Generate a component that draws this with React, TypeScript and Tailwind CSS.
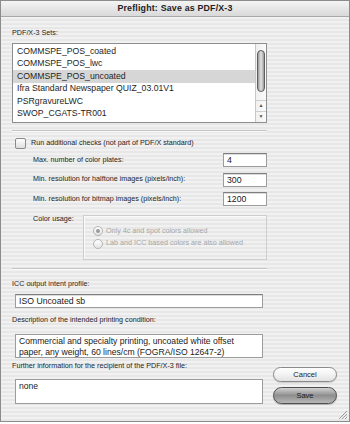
const stripes =
  "bg-[repeating-linear-gradient(to_bottom,#f1f1f1_0px,#f1f1f1_2px,#e7e7e7_2px,#e7e7e7_4px)]";

const sets = [
  "COMMSPE_POS_coated",
  "COMMSPE_POS_lwc",
  "COMMSPE_POS_uncoated",
  "Ifra Standard Newspaper QUIZ_03.01V1",
  "PSRgravureLWC",
  "SWOP_CGATS-TR001",
];

function Field({ value, className = "" }: { value: string; className?: string }) {
  return (
    <div
      className={`h-[14px] whitespace-nowrap border border-[#9c9c9c] border-t-[#7e7e7e] bg-white px-[3px] text-[8.7px] leading-[12px] text-[#1a1a1a] shadow-[inset_0_1px_0_#dcdcdc] ${className}`}
    >
      {value}
    </div>
  );
}

function Radio({ checked, label }: { checked?: boolean; label: string }) {
  return (
    <div className="flex h-[12.5px] items-center gap-[3px] whitespace-nowrap">
      <span className="flex h-[10px] w-[10px] shrink-0 items-center justify-center rounded-full border border-[#b4b4b4] bg-gradient-to-b from-[#ffffff] to-[#e4e4e4]">
        {checked && <span className="h-[4px] w-[4px] rounded-full bg-[#9a9a9a]" />}
      </span>
      <span className="text-[#a6a6a6]">{label}</span>
    </div>
  );
}

function ResizeGrip() {
  return (
    <svg width="9" height="9" viewBox="0 0 9 9" className="absolute bottom-[2px] right-[2px]">
      <path d="M1 9 L9 1 M4 9 L9 4 M7 9 L9 7" stroke="#9a9a9a" strokeWidth="1" />
    </svg>
  );
}

export default function App() {
  return (
    <div className="h-[424px] w-[350px] bg-white font-['Liberation_Sans',Arial,sans-serif] text-[7.2px] text-[#1e1e1e]">
      <div className={`relative flex h-[422px] flex-col border border-[#8c8c8c] ${stripes}`}>
        {/* title bar */}
        <div className="flex h-[16px] items-center justify-center border-b border-[#a8a8a8] bg-gradient-to-b from-[#f4f4f4] to-[#d9d9d9] text-[8.8px] font-bold tracking-[0.2px] text-[#222]">
          Preflight: Save as PDF/X-3
        </div>

        <div className="flex flex-col whitespace-nowrap pl-[11px] pr-[82px]">
          <div className="mt-[10px] h-[12px] leading-[12px]">PDF/X-3 Sets:</div>

          {/* list */}
          <div className="mt-[4px] flex h-[80px] w-[255px] border border-[#8e8e8e] bg-white">
            <div className="flex-1 pt-[1px] text-[8.7px]">
              {sets.map((s, i) => (
                <div
                  key={s}
                  className={`flex h-[12.5px] items-center pl-[4px] ${i === 2 ? "bg-[#d6d6d6]" : ""}`}
                >
                  {s}
                </div>
              ))}
            </div>
            <div className="flex w-[11px] flex-col border-l border-[#c8c8c8] bg-gradient-to-r from-[#f0f0f0] to-[#fbfbfb]">
              <div className="mx-auto mt-[6px] h-[42px] w-[8px] rounded-full border border-[#5e5e5e] bg-gradient-to-r from-[#9a9a9a] via-[#e4e4e4] to-[#9a9a9a]" />
              <div className="flex-1" />
              <div className="flex h-[11px] items-center justify-center border-t border-[#cfcfcf] text-[5px] text-[#555]">▲</div>
              <div className="flex h-[11px] items-center justify-center border-t border-[#cfcfcf] text-[5px] text-[#555]">▼</div>
            </div>
          </div>

          <div className="mt-[7px] h-px w-[255px] bg-[#c4c4c4] shadow-[0_1px_0_#fafafa]" />

          {/* checkbox */}
          <div className="mt-[6px] flex h-[12px] items-center gap-[5px] pl-[3px]">
            <span className="h-[11px] w-[11px] rounded-[2px] border border-[#8a8a8a] bg-gradient-to-b from-[#ffffff] to-[#dedede]" />
            <span>Run additional checks (not part of PDF/X standard)</span>
          </div>

          {/* numeric rows */}
          <div className="mt-[4px] flex flex-col gap-[5.5px] pl-[21px]">
            {[
              ["Max. number of color plates:", "4"],
              ["Min. resolution for halftone images (pixels/inch):", "300"],
              ["Min. resolution for bitmap images (pixels/inch):", "1200"],
            ].map(([l, v]) => (
              <div key={l} className="flex h-[14px] items-center">
                <span className="flex-1">{l}</span>
                <Field value={v} className="w-[44px]" />
              </div>
            ))}
          </div>

          {/* color usage */}
          <div className="mt-[9px] flex pl-[21px]">
            <span className="mt-[-2px] w-[50px] leading-[12px]">Color usage:</span>
            <div className="flex h-[45px] w-[184px] flex-col border border-[#cdcdcd] pl-[9px] pt-[9px] shadow-[inset_1px_1px_0_#fafafa]">
              <Radio checked label="Only 4c and spot colors allowed" />
              <Radio label="Lab and ICC based colors are also allowed" />
            </div>
          </div>

          <div className="mt-[8px] h-px w-[255px] bg-[#c4c4c4] shadow-[0_1px_0_#fafafa]" />

          <div className="mt-[9px] h-[12px] leading-[12px]">ICC output intent profile:</div>
          <Field value="ISO Uncoated sb" className="ml-[3px] mt-[4px] w-[248px]" />

          <div className="mt-[6px] h-[12px] leading-[12px]">Description of the intended printing condition:</div>
          <div className="ml-[3px] mt-[8px] h-[24px] w-[248px] whitespace-normal border border-[#9c9c9c] bg-white px-[3px] pt-[1px] text-[8.6px] leading-[10.5px] text-[#1a1a1a]">
            Commercial and specialty printing, uncoated white offset paper, any weight, 60 lines/cm (FOGRA/ISO 12647-2)
          </div>
        </div>

        <div className="flex whitespace-nowrap pl-[11px] pr-[12px]">
          <div className="flex flex-col">
            <div className="mt-[2px] h-[12px] leading-[12px]">Further information for the recipient of the PDF/X-3 file:</div>
            <div className="ml-[3px] mt-[7px] h-[25px] w-[248px] border border-[#9c9c9c] bg-white px-[3px] pt-[1px] text-[8.6px] leading-[11px] text-[#1a1a1a]">
              none
            </div>
          </div>
          <div className="ml-auto flex flex-col items-end gap-[5px] pt-[9px]">
            <button
              type="button"
              className="flex h-[15px] w-[64px] items-center justify-center rounded-full border border-[#8a8a8a] bg-gradient-to-b from-[#ffffff] via-[#f2f2f2] to-[#e2e2e2] text-[7.5px] text-[#222] shadow-[0_1px_1px_rgba(0,0,0,0.15)]"
            >
              Cancel
            </button>
            <button
              type="button"
              className="flex h-[17px] w-[64px] items-center justify-center rounded-full border border-[#4e4e4e] bg-gradient-to-b from-[#d2d2d2] via-[#8e8e8e] to-[#b8b8b8] text-[7.5px] text-[#1a1a1a] shadow-[0_1px_1px_rgba(0,0,0,0.25)]"
            >
              Save
            </button>
          </div>
        </div>

        <ResizeGrip />
      </div>
    </div>
  );
}
